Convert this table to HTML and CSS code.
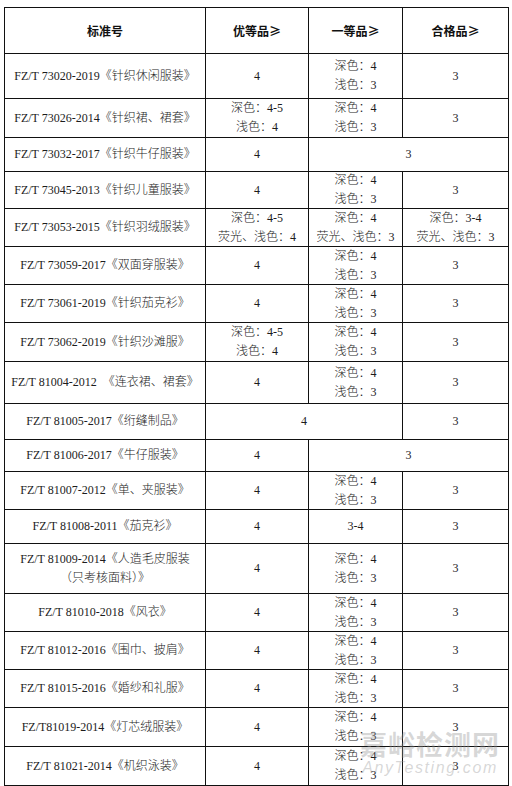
FILE: index.html
```html
<!DOCTYPE html>
<html lang="zh-CN">
<head>
<meta charset="utf-8">
<title>标准号</title>
<link rel="stylesheet" href="styles.css">
</head>
<body>
<div class="page">
  <div class="grid">
    <div class="c hd">标准号</div>
    <div class="c hd">优等品≥</div>
    <div class="c hd">一等品≥</div>
    <div class="c hd">合格品≥</div>

    <div class="c">FZ/T 73020-2019《针织休闲服装》</div>
    <div class="c">4</div>
    <div class="c"><span>深色：4</span><span>浅色：3</span></div>
    <div class="c">3</div>

    <div class="c">FZ/T 73026-2014《针织裙、裙套》</div>
    <div class="c"><span>深色：4-5</span><span>浅色：4</span></div>
    <div class="c"><span>深色：4</span><span>浅色：3</span></div>
    <div class="c">3</div>

    <div class="c">FZ/T 73032-2017《针织牛仔服装》</div>
    <div class="c">4</div>
    <div class="c s2">3</div>

    <div class="c">FZ/T 73045-2013《针织儿童服装》</div>
    <div class="c">4</div>
    <div class="c"><span>深色：4</span><span>浅色：3</span></div>
    <div class="c">3</div>

    <div class="c">FZ/T 73053-2015《针织羽绒服装》</div>
    <div class="c"><span>深色：4-5</span><span>荧光、浅色：4</span></div>
    <div class="c"><span>深色：4</span><span>荧光、浅色：3</span></div>
    <div class="c"><span>深色：3-4</span><span>荧光、浅色：3</span></div>

    <div class="c">FZ/T 73059-2017《双面穿服装》</div>
    <div class="c">4</div>
    <div class="c"><span>深色：4</span><span>浅色：3</span></div>
    <div class="c">3</div>

    <div class="c">FZ/T 73061-2019《针织茄克衫》</div>
    <div class="c">4</div>
    <div class="c"><span>深色：4</span><span>浅色：3</span></div>
    <div class="c">3</div>

    <div class="c">FZ/T 73062-2019《针织沙滩服》</div>
    <div class="c"><span>深色：4-5</span><span>浅色：4</span></div>
    <div class="c"><span>深色：4</span><span>浅色：3</span></div>
    <div class="c">3</div>

    <div class="c pre">FZ/T 81004-2012  《连衣裙、裙套》</div>
    <div class="c">4</div>
    <div class="c"><span>深色：4</span><span>浅色：3</span></div>
    <div class="c">3</div>

    <div class="c">FZ/T 81005-2017《绗缝制品》</div>
    <div class="c s2">4</div>
    <div class="c">3</div>

    <div class="c">FZ/T 81006-2017《牛仔服装》</div>
    <div class="c">4</div>
    <div class="c s2">3</div>

    <div class="c">FZ/T 81007-2012《单、夹服装》</div>
    <div class="c">4</div>
    <div class="c"><span>深色：4</span><span>浅色：3</span></div>
    <div class="c">3</div>

    <div class="c">FZ/T 81008-2011《茄克衫》</div>
    <div class="c">4</div>
    <div class="c">3-4</div>
    <div class="c">3</div>

    <div class="c"><span>FZ/T 81009-2014《人造毛皮服装</span><span>（只考核面料）》</span></div>
    <div class="c">4</div>
    <div class="c"><span>深色：4</span><span>浅色：3</span></div>
    <div class="c">3</div>

    <div class="c">FZ/T 81010-2018《风衣》</div>
    <div class="c">4</div>
    <div class="c"><span>深色：4</span><span>浅色：3</span></div>
    <div class="c">3</div>

    <div class="c">FZ/T 81012-2016《围巾、披肩》</div>
    <div class="c">4</div>
    <div class="c"><span>深色：4</span><span>浅色：3</span></div>
    <div class="c">3</div>

    <div class="c">FZ/T 81015-2016《婚纱和礼服》</div>
    <div class="c">4</div>
    <div class="c"><span>深色：4</span><span>浅色：3</span></div>
    <div class="c">3</div>

    <div class="c">FZ/T81019-2014《灯芯绒服装》</div>
    <div class="c">4</div>
    <div class="c"><span>深色：4</span><span>浅色：3</span></div>
    <div class="c">3</div>

    <div class="c">FZ/T 81021-2014《机织泳装》</div>
    <div class="c">4</div>
    <div class="c"><span>深色：4</span><span>浅色：3</span></div>
    <div class="c">3</div>
  </div>
  <div class="watermark">
    <div class="wm-cn">嘉峪检测网</div>
    <div class="wm-en">AnyTesting.com</div>
  </div>
</div>
</body>
</html>
```
FILE: styles.css
```css
html, body {
  margin: 0;
  padding: 0;
  background: #ffffff;
}

.page {
  position: relative;
  width: 512px;
  height: 786px;
  padding: 7px 0 0 4px;
  box-sizing: border-box;
  font-family: "Liberation Serif", "Noto Sans CJK SC", serif;
  font-size: 12px;
  color: #1c1c1c;
}

.grid {
  display: grid;
  width: 505px;
  box-sizing: border-box;
  grid-template-columns: 201px 103px 94px 106px;
  grid-template-rows: 46px 45px 39px 34px 37px 38px 38px 38px 39px 42px 36px 32px 38px 34px 50px 38px 38px 38px 39px 39px;
  border-left: 1px solid #111;
  border-top: 1px solid #111;
}

.c {
  border-right: 1px solid #111;
  border-bottom: 1px solid #111;
  display: flex;
  flex-direction: column;
  align-items: center;
  justify-content: center;
  text-align: center;
  line-height: 19px;
  white-space: nowrap;
  font-weight: 300;
}

.c span {
  display: block;
}

.s2 {
  grid-column: span 2;
}

.pre {
  white-space: pre;
}

.hd {
  font-family: "Noto Sans CJK SC", "Liberation Sans", sans-serif;
  font-weight: 700;
  color: #111;
  font-size: 12px;
}

.watermark {
  position: absolute;
  left: 360px;
  top: 728px;
  display: flex;
  flex-direction: column;
  align-items: center;
  pointer-events: none;
}

.wm-cn {
  font-family: "Noto Sans CJK SC", sans-serif;
  font-weight: 700;
  font-size: 27px;
  line-height: 32px;
  letter-spacing: 1px;
  color: rgba(150, 150, 150, 0.38);
}

.wm-en {
  font-family: "Liberation Sans", sans-serif;
  font-style: italic;
  font-size: 16px;
  line-height: 16px;
  letter-spacing: 1.6px;
  color: rgba(150, 150, 150, 0.38);
}
```
